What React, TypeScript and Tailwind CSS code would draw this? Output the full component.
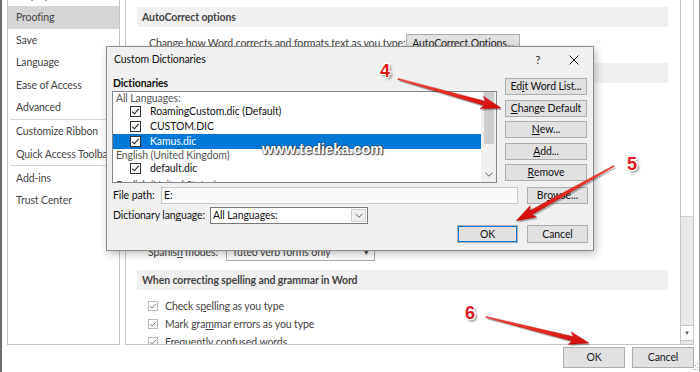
import React from "react";

function DlgCheck() {
  return (
    <svg width="11" height="11" viewBox="0 0 11 11" className="shrink-0">
      <rect x="0.5" y="0.5" width="10" height="10" fill="#fff" stroke="#333" />
      <path d="M2.3 5.6 L4.4 7.8 L8.7 2.8" fill="none" stroke="#222" strokeWidth="1.1" />
    </svg>
  );
}

function OptCheck() {
  return (
    <svg width="10" height="10" viewBox="0 0 10 10" className="shrink-0">
      <rect x="0.5" y="0.5" width="9" height="9" fill="#fff" stroke="#b8b8b8" />
      <path d="M2 5.2 L4 7.2 L8 2.8" fill="none" stroke="#7a7a7a" strokeWidth="1" />
    </svg>
  );
}

function Chevron({ color = "#606060" }: { color?: string }) {
  return (
    <svg width="8" height="5" viewBox="0 0 8 5">
      <path d="M0.5 0.8 L4 4.2 L7.5 0.8" fill="none" stroke={color} strokeWidth="1" />
    </svg>
  );
}

function Btn({ children, className = "" }: { children: React.ReactNode; className?: string }) {
  return (
    <div className={"flex items-center justify-center bg-[#e1e1e1] border border-[#adadad] text-[#111] shrink-0 " + className}>
      {children}
    </div>
  );
}

function arrowPts(x1: number, y1: number, x2: number, y2: number) {
  const dx = x2 - x1;
  const dy = y2 - y1;
  const L = Math.hypot(dx, dy);
  const ux = dx / L;
  const uy = dy / L;
  const nx = -uy;
  const ny = ux;
  const hl = 17;
  const hw = 6.5;
  const sw = 2.3;
  const tw = 0.6;
  const bx = x2 - ux * hl;
  const by = y2 - uy * hl;
  const pts = [
    [x1 + nx * tw, y1 + ny * tw],
    [bx + nx * sw, by + ny * sw],
    [bx - ux * 3 + nx * hw, by - uy * 3 + ny * hw],
    [x2, y2],
    [bx - ux * 3 - nx * hw, by - uy * 3 - ny * hw],
    [bx - nx * sw, by - ny * sw],
    [x1 - nx * tw, y1 - ny * tw],
  ];
  return pts.map((p) => p[0].toFixed(1) + "," + p[1].toFixed(1)).join(" ");
}

function Arrow({ x1, y1, x2, y2 }: { x1: number; y1: number; x2: number; y2: number }) {
  return (
    <g>
      <polygon points={arrowPts(x1 + 1.5, y1 + 1.8, x2 + 1.5, y2 + 1.8)} fill="rgba(0,0,0,0.28)" />
      <polygon points={arrowPts(x1, y1, x2, y2)} fill="url(#redg)" stroke="#b00000" strokeWidth="0.4" />
    </g>
  );
}

const navItems = [
  "Display",
  "Proofing",
  "Save",
  "Language",
  "Ease of Access",
  "Advanced",
  "-",
  "Customize Ribbon",
  "Quick Access Toolbar",
  "-",
  "Add-ins",
  "Trust Center",
];

function Nav() {
  return (
    <div className="ml-[5px] w-[113px] h-full border-l border-r border-b border-[#c6c6c6] overflow-hidden shrink-0">
      <div className="mt-[-16.5px] flex flex-col">
        {navItems.map((t, i) =>
          t === "-" ? (
            <div key={i} className="h-px bg-[#d6d6d6] ml-[2px] mb-[0.5px]" />
          ) : (
            <div
              key={i}
              className={
                "h-[22.5px] flex items-center pl-[8px] whitespace-nowrap " +
                (t === "Proofing" ? "bg-[#d5d5d5]" : "")
              }
            >
              {t}
            </div>
          )
        )}
      </div>
    </div>
  );
}

function Header({ children, className = "" }: { children?: React.ReactNode; className?: string }) {
  return (
    <div className={"h-[20px] w-[531px] bg-[#f0f0f0] flex items-center pl-[5px] font-bold text-[#444] shrink-0 " + className}>
      {children}
    </div>
  );
}

function Main() {
  return (
    <div className="ml-[5px] w-[569px] h-full border-l border-r border-b border-[#c6c6c6] flex overflow-hidden shrink-0">
      <div className="pl-[11px] w-[542px] flex flex-col shrink-0">
        <Header className="mt-[7px]">AutoCorrect options</Header>
        <div className="mt-[7px] h-[18px] flex items-center pl-[12px] shrink-0">
          <span className="w-[257px] whitespace-nowrap">Change how Word corrects and formats text as you type:</span>
          <Btn className="w-[114px] h-[18px] text-[#222]">AutoCorrect Options...</Btn>
        </div>
        <Header className="mt-[11px]" />
        <div className="mt-[160px] h-[18px] flex items-center pl-[11px] shrink-0">
          <span className="w-[78px] whitespace-nowrap">
            Spanis<span className="underline">h</span> modes:
          </span>
          <div className="w-[149px] h-[18px] border border-[#ababab] bg-white flex items-center justify-between pl-[5px] pr-[4px]">
            <span>Tuteo verb forms only</span>
            <span className="text-[8px] text-[#444]">▼</span>
          </div>
        </div>
        <Header className="mt-[9px]">When correcting spelling and grammar in Word</Header>
        <div className="mt-[7px] flex flex-col pl-[11px]">
          <div className="h-[18px] flex items-center gap-[7px] whitespace-nowrap">
            <OptCheck />
            <span>
              Check s<span className="underline">p</span>elling as you type
            </span>
          </div>
          <div className="h-[18px] flex items-center gap-[7px] whitespace-nowrap">
            <OptCheck />
            <span>
              Mark gra<span className="underline">m</span>mar errors as you type
            </span>
          </div>
          <div className="h-[18px] flex items-center gap-[7px] whitespace-nowrap">
            <OptCheck />
            <span>Frequently confused words</span>
          </div>
        </div>
      </div>
      <div className="ml-[12px] w-[13px] border-l border-[#c6c6c6] flex flex-col shrink-0">
        <div className="h-[217px] bg-white border-b border-[#d0d0d0] shrink-0" />
        <div className="flex-1 bg-[#e8e8e8]" />
        <div className="h-[16px] bg-white border-t border-b border-[#c6c6c6] flex items-center justify-center text-[6px] text-[#555] shrink-0">
          ▼
        </div>
        <div className="h-[3px] bg-[#e8e8e8] shrink-0" />
      </div>
    </div>
  );
}

function ListRowHeader({ children }: { children: React.ReactNode }) {
  return <div className="h-[12px] flex items-center pl-[3px] text-[#555] whitespace-nowrap shrink-0">{children}</div>;
}

function ListRow({ children, selected = false }: { children: React.ReactNode; selected?: boolean }) {
  return (
    <div
      className={
        "h-[15px] flex items-center pl-[17px] gap-[9px] whitespace-nowrap shrink-0 " +
        (selected ? "bg-[#0078d7] text-white" : "text-[#111]")
      }
    >
      <DlgCheck />
      <span>{children}</span>
    </div>
  );
}

function Dialog() {
  return (
    <div className="absolute left-[106px] top-[46px] w-[488px] h-[205px] bg-[#f0f0f0] border border-[#8c8c8c] shadow-[2px_3px_8px_rgba(0,0,0,0.25)] flex flex-col text-[#111]">
      <div className="h-[25px] flex items-center pl-[7px] shrink-0">
        <span className="flex-1">Custom Dictionaries</span>
        <span className="w-[12px] text-center text-[11px] text-[#222] mr-[25px]">?</span>
        <svg width="10" height="10" viewBox="0 0 10 10" className="mr-[14px]">
          <path d="M0.5 0.5 L9.5 9.5 M9.5 0.5 L0.5 9.5" stroke="#222" strokeWidth="1" />
        </svg>
      </div>
      <div className="flex px-[5px] shrink-0">
        <div className="w-[385px] flex flex-col shrink-0">
          <div className="h-[19px] flex items-center pt-[3px] pl-[1px] font-bold">Dictionaries</div>
          <div className="h-[92px] border border-[#828790] bg-white flex overflow-hidden">
            <div className="flex-1 flex flex-col overflow-hidden">
              <ListRowHeader>All Languages:</ListRowHeader>
              <ListRow>RoamingCustom.dic (Default)</ListRow>
              <ListRow>CUSTOM.DIC</ListRow>
              <ListRow selected>Kamus.dic</ListRow>
              <ListRowHeader>English (United Kingdom)</ListRowHeader>
              <ListRow>default.dic</ListRow>
              <div className="h-[3px] shrink-0" />
              <ListRowHeader>English (United States)</ListRowHeader>
            </div>
            <div className="w-[15px] bg-[#f0f0f0] flex flex-col items-center shrink-0">
              <div className="w-[10px] h-[52px] bg-[#cdcdcd]" />
              <div className="flex-1" />
              <div className="mb-[5px]">
                <Chevron />
              </div>
            </div>
          </div>
        </div>
        <div className="ml-[8px] w-[82px] pt-[6px] flex flex-col gap-[4.5px] shrink-0">
          <Btn className="w-[82px] h-[17px]">
            Ed<span className="underline">i</span>t Word List...
          </Btn>
          <Btn className="w-[82px] h-[17px]">
            <span className="underline">C</span>hange Default
          </Btn>
          <Btn className="w-[82px] h-[17px]">
            <span className="underline">N</span>ew...
          </Btn>
          <Btn className="w-[82px] h-[17px]">
            <span className="underline">A</span>dd...
          </Btn>
          <Btn className="w-[82px] h-[17px]">
            <span className="underline">R</span>emove
          </Btn>
        </div>
      </div>
      <div className="mt-[4px] h-[17px] flex items-center px-[5px] shrink-0">
        <span className="w-[49px] pl-[1px] whitespace-nowrap">File path:</span>
        <div className="w-[357px] h-[17px] border border-[#c8c8c8] bg-[#fafafa] flex items-center pl-[2px]">E:</div>
        <Btn className="ml-[9px] w-[61px] h-[17px]">
          Br<span className="underline">o</span>wse...
        </Btn>
      </div>
      <div className="mt-[3px] h-[17px] flex items-center px-[5px] shrink-0">
        <span className="w-[98px] pl-[1px] whitespace-nowrap">
          Dictionary lan<span className="underline">g</span>uage:
        </span>
        <div className="w-[158px] h-[17px] border border-[#7a7a7a] bg-white flex items-center pl-[2px] pr-[1px]">
          <span className="flex-1">All Languages:</span>
          <div className="w-[15px] h-[13px] bg-[#f0f0f0] border border-[#cfcfcf] flex items-center justify-center">
            <Chevron color="#666" />
          </div>
        </div>
      </div>
      <div className="mt-[1px] h-[18px] flex items-center justify-end gap-[9px] pr-[5px] shrink-0">
        <Btn className="w-[61px] h-[18px] border-[#0078d7] shadow-[inset_0_0_0_1px_#0078d7]">OK</Btn>
        <Btn className="w-[61px] h-[18px]">Cancel</Btn>
      </div>
    </div>
  );
}

export default function App() {
  return (
    <div className="relative w-[700px] h-[372px] overflow-hidden bg-white text-[10.5px] tracking-[-0.1px] leading-none text-[#444] font-[family-name:Lato,'Liberation_Sans',sans-serif]">
      <div className="w-[700px] h-[372px] border-l-2 border-l-[#6e6e6e] border-r border-r-[#a0a0a0] flex flex-col">
        <div className="flex h-[345px] shrink-0">
          <Nav />
          <Main />
        </div>
        <div className="flex justify-end gap-[7px] pt-[2px] pr-[5px]">
          <Btn className="w-[62px] h-[21px] text-[#222]">OK</Btn>
          <Btn className="w-[62px] h-[21px] text-[#222]">Cancel</Btn>
        </div>
      </div>
      <Dialog />
      <div className="absolute left-[262px] top-[142px] text-[14.5px] font-bold leading-none tracking-normal text-white font-[family-name:'Liberation_Sans',Arial,sans-serif] [text-shadow:0_0_2px_#333,1px_1px_1px_#444]">
        www.tedieka.com
      </div>
      <svg className="absolute left-0 top-0 pointer-events-none" width="700" height="372" viewBox="0 0 700 372">
        <defs>
          <linearGradient id="redg" x1="0" y1="0" x2="0" y2="1">
            <stop offset="0" stopColor="#ff4a3a" />
            <stop offset="1" stopColor="#d10a0a" />
          </linearGradient>
        </defs>
        <Arrow x1={398} y1={79} x2={501} y2={108} />
        <Arrow x1={614} y1={166} x2={516} y2={221} />
        <Arrow x1={486} y1={317} x2={589} y2={343} />
        <g fill="#9a9a9a">
          <rect x="695" y="365" width="1" height="1" />
          <rect x="697" y="363" width="1" height="1" />
          <rect x="697" y="367" width="1" height="1" />
          <rect x="693" y="369" width="1" height="1" />
          <rect x="695" y="369" width="1" height="1" />
          <rect x="697" y="369" width="1" height="1" />
        </g>
      </svg>
      <div className="absolute left-[380px] top-[62px] text-[18px] font-bold leading-none tracking-normal text-[#e0191f] font-[family-name:'Liberation_Sans',Arial,sans-serif] [text-shadow:1px_1px_0_#fff,-1px_-1px_0_#fff,1px_-1px_0_#fff,-1px_1px_0_#fff,2px_2px_3px_rgba(0,0,0,0.6)]">
        4
      </div>
      <div className="absolute left-[627px] top-[155px] text-[18px] font-bold leading-none tracking-normal text-[#e0191f] font-[family-name:'Liberation_Sans',Arial,sans-serif] [text-shadow:1px_1px_0_#fff,-1px_-1px_0_#fff,1px_-1px_0_#fff,-1px_1px_0_#fff,2px_2px_3px_rgba(0,0,0,0.6)]">
        5
      </div>
      <div className="absolute left-[465px] top-[304px] text-[18px] font-bold leading-none tracking-normal text-[#e0191f] font-[family-name:'Liberation_Sans',Arial,sans-serif] [text-shadow:1px_1px_0_#fff,-1px_-1px_0_#fff,1px_-1px_0_#fff,-1px_1px_0_#fff,2px_2px_3px_rgba(0,0,0,0.6)]">
        6
      </div>
    </div>
  );
}
